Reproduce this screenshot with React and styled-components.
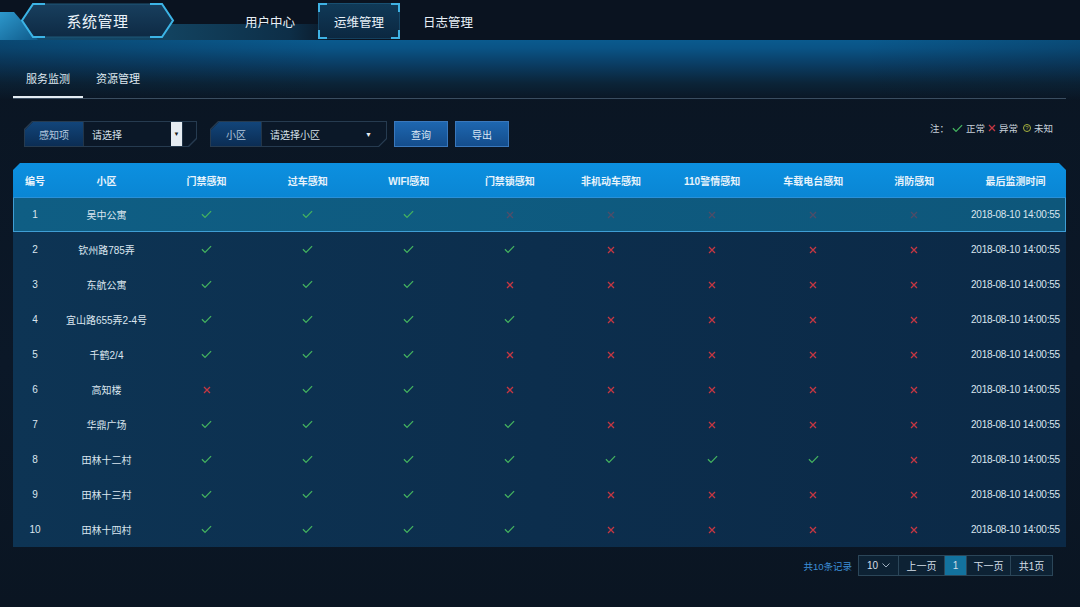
import React from "react";
import styled, { createGlobalStyle, css } from "styled-components";

const GlobalStyle = createGlobalStyle`
  html, body { margin: 0; padding: 0; background: #0a1522; }
  body { font-family: "Liberation Sans", "Noto Sans CJK SC", sans-serif; }
  * { box-sizing: border-box; }
`;

const Page = styled.div`
  width: 1080px;
  height: 607px;
  overflow: hidden;
  background: linear-gradient(180deg, #0a1522 0%, #0b1828 60%, #0a1522 100%);
  color: #d6e2ec;
`;

const TopBar = styled.header`
  height: 40px;
  display: flex;
  align-items: flex-start;
  background:
    linear-gradient(90deg, #134b6e 0, #12425f 170px, #0d2e47 290px, rgba(10, 20, 34, 0) 340px) 0 24px / 100% 16px no-repeat,
    #0a1320;
`;

const Brand = styled.div`
  position: relative;
  flex: none;
  width: 180px;
  height: 40px;
  display: flex;
  align-items: center;
  justify-content: center;
  padding: 1px 0 0 15px;
`;

const BrandArt = styled.svg`
  position: absolute;
  left: 0;
  top: 0;
`;

const BrandText = styled.span`
  position: relative;
  font-size: 15px;
  color: #eaf2f9;
  letter-spacing: 0.5px;
`;

const Nav = styled.nav`
  display: flex;
  gap: 7px;
  margin-left: 49px;
  margin-top: 3px;
`;

const bracket = "#3fb2e4";
const NavItem = styled.a`
  height: 36px;
  padding: 0 16px;
  display: flex;
  align-items: center;
  font-size: 12.5px;
  color: #e8f0f7;
  cursor: pointer;
  ${(p) =>
    p.$active &&
    css`
      background:
        linear-gradient(${bracket}, ${bracket}) left top / 9px 2px no-repeat,
        linear-gradient(${bracket}, ${bracket}) left top / 2px 9px no-repeat,
        linear-gradient(${bracket}, ${bracket}) right top / 9px 2px no-repeat,
        linear-gradient(${bracket}, ${bracket}) right top / 2px 9px no-repeat,
        linear-gradient(${bracket}, ${bracket}) left bottom / 9px 2px no-repeat,
        linear-gradient(${bracket}, ${bracket}) left bottom / 2px 9px no-repeat,
        linear-gradient(${bracket}, ${bracket}) right bottom / 9px 2px no-repeat,
        linear-gradient(${bracket}, ${bracket}) right bottom / 2px 9px no-repeat,
        linear-gradient(180deg, #103a58, #0b2740);
      box-shadow: inset 0 0 0 1px rgba(63, 178, 228, 0.18);
    `}
`;

const Glow = styled.div`
  height: 60px;
  background:
    linear-gradient(90deg, rgba(10, 20, 34, 0.25) 0%, rgba(10, 20, 34, 0) 30%, rgba(10, 20, 34, 0) 80%, rgba(10, 20, 34, 0.2) 100%),
    linear-gradient(180deg, #0a5a8e 0%, #0a5385 14%, #0a3d64 40%, #0b2438 72%, #0a1624 100%);
`;

const Tabs = styled.div`
  margin: 0 14px 0 13px;
  padding-top: 26px;
  display: flex;
  border-bottom: 1px solid #3a4d60;
`;

const Tab = styled.a`
  padding: 5px 13px 8px;
  font-size: 11px;
  line-height: 17px;
  color: #dfe8f0;
  border-bottom: 2px solid ${(p) => (p.$active ? "#e3ebf2" : "transparent")};
  cursor: pointer;
`;

const Toolbar = styled.div`
  margin-top: 21px;
  height: 26px;
  padding: 0 27px 0 24px;
  display: flex;
  align-items: center;
`;

const chamfer = "polygon(8px 0, 100% 0, 100% calc(100% - 8px), calc(100% - 8px) 100%, 0 100%, 0 8px)";

const Filter = styled.div`
  width: ${(p) => p.$w}px;
  height: 26px;
  padding: 1px;
  margin-right: ${(p) => p.$gap}px;
  background: #263b50;
  clip-path: ${chamfer};
`;

const FilterInner = styled.div`
  height: 100%;
  display: flex;
  background: #0a1727;
  clip-path: ${chamfer};
  padding-right: ${(p) => p.$pad}px;
`;

const FilterLabel = styled.span`
  width: ${(p) => p.$w}px;
  flex: none;
  display: flex;
  align-items: center;
  justify-content: center;
  font-size: 10px;
  color: #b4c8de;
  background: linear-gradient(180deg, #12457a, #0b2d54);
`;

const SelectBox = styled.div`
  flex: 1;
  display: flex;
  align-items: center;
  padding-left: 8px;
  font-size: 10px;
  color: #d6e0ea;
  background: #0b1828;
  border-left: 1px solid #223548;
  border-right: ${(p) => (p.$edge ? "1px solid #223548" : "none")};
`;

const DropButton = styled.span`
  margin-left: auto;
  width: 11px;
  height: 100%;
  display: flex;
  align-items: center;
  justify-content: center;
  background: #e6ecf2;
  color: #1a1a1a;
  font-size: 6px;
`;

const Caret = styled.span`
  margin-left: auto;
  margin-right: 14px;
  color: #e6ecf2;
  font-size: 7px;
`;

const Button = styled.button`
  width: 54px;
  height: 26px;
  margin-right: 7px;
  border: 1px solid #3a78bc;
  background: linear-gradient(180deg, #1e67b0, #144d8c);
  color: #dce8f5;
  font-family: inherit;
  font-size: 10px;
  cursor: pointer;
`;

const Legend = styled.div`
  margin-left: auto;
  align-self: flex-start;
  display: flex;
  align-items: center;
  gap: 3px;
  font-size: 9.5px;
  color: #c6d0da;
`;

const Unknown = styled.span`
  width: 8px;
  height: 8px;
  border: 1px solid #a9b43e;
  border-radius: 50%;
  color: #a9b43e;
  font-size: 6px;
  line-height: 6px;
  text-align: center;
  margin-left: 2px;
`;

const Table = styled.div`
  margin: 16px 14px 0 13px;
  width: 1053px;
`;

const grid = css`
  display: grid;
  grid-template-columns: 44px 99px repeat(9, 1fr);
  align-items: center;
  justify-items: center;
`;

const HeadRow = styled.div`
  ${grid};
  height: 34px;
  background: linear-gradient(180deg, #0c90e0, #0a86d4);
  clip-path: polygon(7px 0, calc(100% - 7px) 0, 100% 7px, 100% 100%, 0 100%, 0 7px);
  font-size: 10px;
  font-weight: bold;
  color: #e8f3fb;
`;

const Body = styled.div`
  background: linear-gradient(90deg, #0d3454 0%, #0c2e4d 50%, #0b2946 100%);
`;

const Row = styled.div`
  ${grid};
  height: 35px;
  font-size: 10px;
  color: #dbe6ef;
  ${(p) =>
    p.$active &&
    css`
      background: linear-gradient(90deg, #0f5e84, #0e577b);
      box-shadow: inset 0 1px 0 #2a90d8, inset 0 0 0 1px #3f9ed4;
      svg.cross { opacity: 0.35; }
    `}
`;

const Time = styled.span`
  letter-spacing: -0.2px;
`;

const Footer = styled.div`
  margin-top: 8px;
  padding-right: 27px;
  display: flex;
  justify-content: flex-end;
  align-items: center;
  gap: 6px;
`;

const Total = styled.span`
  font-size: 9.5px;
  color: #3d8fd8;
`;

const Pager = styled.div`
  display: flex;
  height: 21px;
  border: 1px solid #2b4659;
  background: #0d2234;
`;

const PageCell = styled.span`
  width: ${(p) => p.$w}px;
  display: flex;
  align-items: center;
  justify-content: center;
  gap: 4px;
  font-size: 10px;
  color: #d4dee8;
  border-left: ${(p) => (p.$first ? "none" : "1px solid #2b4659")};
  background: ${(p) => (p.$active ? "#13729e" : "transparent")};
`;

const Check = ({ size = 11 }) => (
  <svg width={size} height={size * 0.75} viewBox="0 0 12 9">
    <path d="M1 4.6 L4.4 8 L11 1.2" fill="none" stroke="#44b25f" strokeWidth="1.4" />
  </svg>
);

const Cross = ({ size = 8 }) => (
  <svg className="cross" width={size} height={size} viewBox="0 0 8 8">
    <path d="M1 1 L7 7 M7 1 L1 7" fill="none" stroke="#c63742" strokeWidth="1.3" />
  </svg>
);

const columns = ["编号", "小区", "门禁感知", "过车感知", "WIFI感知", "门禁锁感知", "非机动车感知", "110警情感知", "车载电台感知", "消防感知", "最后监测时间"];

const rows = [
  ["吴中公寓", "11100000"],
  ["钦州路785弄", "11110000"],
  ["东航公寓", "11100000"],
  ["宜山路655弄2-4号", "11110000"],
  ["千鹤2/4", "11100000"],
  ["高知楼", "01100000"],
  ["华鼎广场", "11110000"],
  ["田林十二村", "11111110"],
  ["田林十三村", "11110000"],
  ["田林十四村", "11110000"],
];

export default function App() {
  return (
    <>
      <GlobalStyle />
      <Page>
        <TopBar>
          <Brand>
            <BrandArt width="180" height="40" viewBox="0 0 180 40">
              <defs>
                <linearGradient id="stripe" x1="0" y1="0" x2="1" y2="1">
                  <stop offset="0" stopColor="#2d98cc" />
                  <stop offset="1" stopColor="#0f5a8a" />
                </linearGradient>
                <linearGradient id="hexFill" x1="0" y1="0" x2="0" y2="1">
                  <stop offset="0" stopColor="#183f5e" />
                  <stop offset="1" stopColor="#0e2a44" />
                </linearGradient>
              </defs>
              <polygon points="0,12 14,12 38,40 0,40" fill="url(#stripe)" />
              <polygon points="34,4 162,4 173,20.5 162,37 34,37 22,20.5" fill="url(#hexFill)" stroke="#1f5878" strokeWidth="1" />
              <polyline points="45,4 33,4 22,20.5 33,37 45,37" fill="none" stroke="#3cb4e6" strokeWidth="2" />
              <polyline points="150,4 162,4 173,20.5 162,37 150,37" fill="none" stroke="#3cb4e6" strokeWidth="2" />
            </BrandArt>
            <BrandText>系统管理</BrandText>
          </Brand>
          <Nav>
            <NavItem>用户中心</NavItem>
            <NavItem $active>运维管理</NavItem>
            <NavItem>日志管理</NavItem>
          </Nav>
        </TopBar>

        <Glow>
          <Tabs>
            <Tab $active>服务监测</Tab>
            <Tab>资源管理</Tab>
          </Tabs>
        </Glow>

        <Toolbar>
          <Filter $w={173} $gap={13}>
            <FilterInner $pad={13}>
              <FilterLabel $w={58}>感知项</FilterLabel>
              <SelectBox $edge>
                请选择
                <DropButton>▼</DropButton>
              </SelectBox>
            </FilterInner>
          </Filter>
          <Filter $w={177} $gap={7}>
            <FilterInner $pad={0}>
              <FilterLabel $w={50}>小区</FilterLabel>
              <SelectBox>
                请选择小区
                <Caret>▼</Caret>
              </SelectBox>
            </FilterInner>
          </Filter>
          <Button>查询</Button>
          <Button>导出</Button>
          <Legend>
            注：
            <Check size={11} />
            正常
            <Cross size={8} />
            异常
            <Unknown>?</Unknown>
            未知
          </Legend>
        </Toolbar>

        <Table>
          <HeadRow>
            {columns.map((c) => (
              <span key={c}>{c}</span>
            ))}
          </HeadRow>
          <Body>
            {rows.map(([name, flags], i) => (
              <Row key={name} $active={i === 0}>
                <span>{i + 1}</span>
                <span>{name}</span>
                {flags.split("").map((f, j) => (f === "1" ? <Check key={j} /> : <Cross key={j} />))}
                <Time>2018-08-10 14:00:55</Time>
              </Row>
            ))}
          </Body>
        </Table>

        <Footer>
          <Total>共10条记录</Total>
          <Pager>
            <PageCell $w={39} $first>
              10
              <svg width="8" height="5" viewBox="0 0 8 5">
                <path d="M0.5 0.5 L4 4 L7.5 0.5" fill="none" stroke="#9fb0c0" strokeWidth="1" />
              </svg>
            </PageCell>
            <PageCell $w={46}>上一页</PageCell>
            <PageCell $w={22} $active>1</PageCell>
            <PageCell $w={44}>下一页</PageCell>
            <PageCell $w={42}>共1页</PageCell>
          </Pager>
        </Footer>
      </Page>
    </>
  );
}
